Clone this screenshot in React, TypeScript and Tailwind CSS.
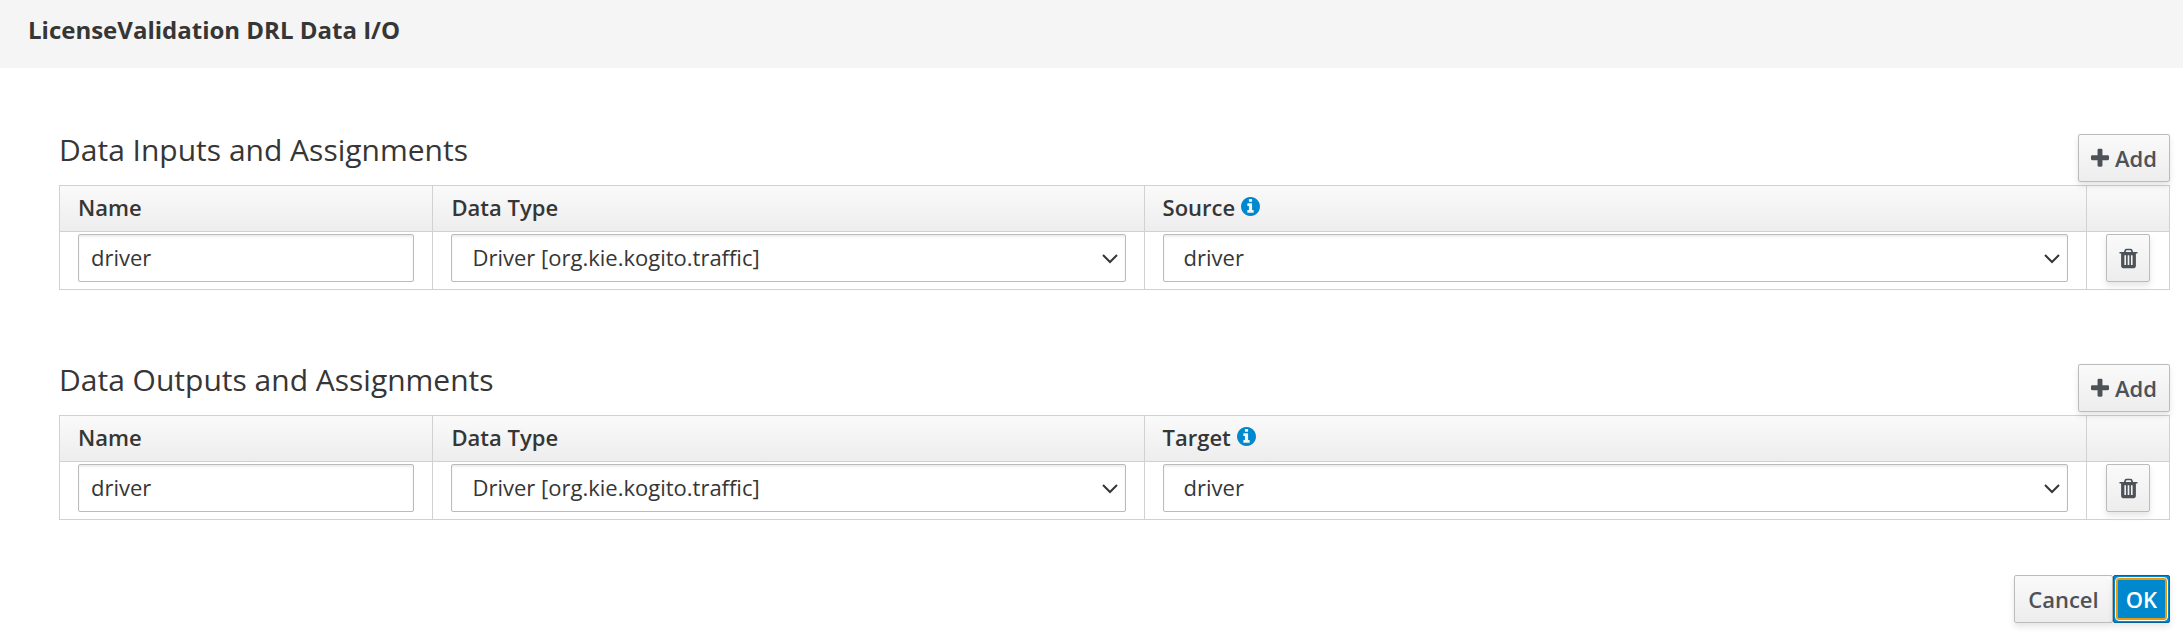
import { useState } from "react";

type Row = { name: string; dataType: string; value: string };

type AssignmentsProps = {
  id: string;
  title: string;
  valueLabel: string;
  hint: string;
};

const button =
  "flex h-12 cursor-pointer items-center justify-center rounded-xs border border-[#bbb] bg-linear-to-b from-[#fafafa] to-[#ededed] font-semibold text-[#4d5258] shadow-[0_4px_6px_rgba(3,3,3,0.1)]";

const field =
  "block h-12 w-full rounded-xs border border-[#bbb] bg-white pb-0.5 text-[#363636] shadow-[inset_0_2px_2px_rgba(3,3,3,0.075)] outline-none";

const headCell = "border border-[#d1d1d1] px-[18px] pb-1 font-semibold";
const bodyCell = "border border-[#d1d1d1] px-[18px] pt-0.5";

function PlusIcon() {
  return (
    <svg viewBox="192 0 1408 1792" className="h-[23px] w-[18px]" fill="currentColor" aria-hidden="true">
      <path d="M1600 736v192q0 40-28 68t-68 28h-416v416q0 40-28 68t-68 28h-192q-40 0-68-28t-28-68v-416h-416q-40 0-68-28t-28-68v-192q0-40 28-68t68-28h416v-416q0-40 28-68t68-28h192q40 0 68 28t28 68v416h416q40 0 68 28t28 68z" />
    </svg>
  );
}

function TrashIcon() {
  return (
    <svg viewBox="0 0 1792 1792" className="size-[23px]" fill="currentColor" aria-hidden="true">
      <path d="M704 1376v-704q0-14-9-23t-23-9h-64q-14 0-23 9t-9 23v704q0 14 9 23t23 9h64q14 0 23-9t9-23zm256 0v-704q0-14-9-23t-23-9h-64q-14 0-23 9t-9 23v704q0 14 9 23t23 9h64q14 0 23-9t9-23zm256 0v-704q0-14-9-23t-23-9h-64q-14 0-23 9t-9 23v704q0 14 9 23t23 9h64q14 0 23-9t9-23zm-544-992h448l-48-117q-7-9-17-11h-317q-10 2-17 11zm928 32v64q0 14-9 23t-23 9h-96v948q0 83-47 143.500t-113 60.500h-832q-66 0-113-58.500t-47-141.500v-952h-96q-14 0-23-9t-9-23v-64q0-14 9-23t23-9h309l70-167q15-37 54-63t79-26h320q40 0 79 26t54 63l70 167h309q14 0 23 9t9 23z" />
    </svg>
  );
}

function InfoIcon() {
  return (
    <svg viewBox="128 128 1536 1536" className="size-[19px] text-[#0088ce]" fill="currentColor" aria-hidden="true">
      <path d="M1152 1376v-160q0-14-9-23t-23-9h-96v-512q0-14-9-23t-23-9h-320q-14 0-23 9t-9 23v160q0 14 9 23t23 9h96v320h-96q-14 0-23 9t-9 23v160q0 14 9 23t23 9h448q14 0 23-9t9-23zm-128-896v-160q0-14-9-23t-23-9h-192q-14 0-23 9t-9 23v160q0 14 9 23t23 9h192q14 0 23-9t9-23zm640 416q0 209-103 385.500t-279.500 279.500-385.500 103-385.500-103-279.500-279.500-103-385.500 103-385.500 279.500-279.500 385.500-103 385.500 103 279.500 279.500 103 385.500z" />
    </svg>
  );
}

function Select({ label, value, options }: { label: string; value: string; options: string[] }) {
  return (
    <div className="relative">
      <select aria-label={label} defaultValue={value} className={`${field} appearance-none pr-12 pl-5`}>
        {options.map((option) => (
          <option key={option}>{option}</option>
        ))}
      </select>
      <svg
        viewBox="0 0 16 10"
        className="pointer-events-none absolute top-5 right-2 h-[10px] w-4"
        fill="none"
        stroke="#363636"
        strokeWidth="2"
        aria-hidden="true"
      >
        <path d="M1 1l7 7 7-7" />
      </svg>
    </div>
  );
}

function Assignments({ id, title, valueLabel, hint }: AssignmentsProps) {
  const [rows, setRows] = useState<Row[]>([
    { name: "driver", dataType: "Driver [org.kie.kogito.traffic]", value: "driver" },
  ]);

  const addRow = () => setRows([...rows, { name: "", dataType: "", value: "" }]);
  const removeRow = (index: number) => setRows(rows.filter((_, i) => i !== index));

  return (
    <section aria-labelledby={id}>
      <div className="flex items-start justify-between pb-[3px]">
        <h2 id={id} className="text-[30px] leading-8">
          {title}
        </h2>
        <button type="button" onClick={addRow} className={`${button} gap-1.5 px-3`}>
          <PlusIcon />
          Add
        </button>
      </div>
      <table className="w-full table-fixed border-collapse">
        <colgroup>
          <col className="w-[17.7%]" />
          <col className="w-[33.7%]" />
          <col />
          <col className="w-[83px]" />
        </colgroup>
        <thead>
          <tr className="h-[46px] bg-linear-to-b from-[#fafafa] to-[#ededed] text-left">
            <th className={headCell}>Name</th>
            <th className={headCell}>Data Type</th>
            <th className={headCell}>
              <span className="flex items-center gap-1.5" title={hint}>
                {valueLabel}
                <InfoIcon />
              </span>
            </th>
            <th className="border border-[#d1d1d1]" aria-label="Actions" />
          </tr>
        </thead>
        <tbody>
          {rows.map((row, i) => (
            <tr key={i} className="h-[58px] align-top">
              <td className={bodyCell}>
                <input aria-label="Name" defaultValue={row.name} className={`${field} px-3`} />
              </td>
              <td className={bodyCell}>
                <Select label="Data Type" value={row.dataType} options={[row.dataType]} />
              </td>
              <td className={bodyCell}>
                <Select label={valueLabel} value={row.value} options={[row.value]} />
              </td>
              <td className={bodyCell}>
                <button type="button" aria-label="Delete" onClick={() => removeRow(i)} className={`${button} mx-auto w-11`}>
                  <TrashIcon />
                </button>
              </td>
            </tr>
          ))}
        </tbody>
      </table>
    </section>
  );
}

export default function App() {
  return (
    <div className="bg-white font-['Open_Sans',sans-serif] text-[22px] leading-8 text-[#363636]">
      <header className="bg-[#f5f5f5] px-7 pt-3.5 pb-[22px]">
        <h1 className="text-2xl leading-8 font-bold">LicenseValidation DRL Data I/O</h1>
      </header>
      <main className="pt-[66px] pr-[13px] pl-[59px]">
        <div className="flex flex-col gap-[74px]">
          <Assignments
            id="inputs"
            title="Data Inputs and Assignments"
            valueLabel="Source"
            hint="Variable or constant read into the input"
          />
          <Assignments
            id="outputs"
            title="Data Outputs and Assignments"
            valueLabel="Target"
            hint="Variable that receives the output"
          />
        </div>
        <div className="flex justify-end pt-[55px] pb-3">
          <button type="button" className={`${button} px-[13px]`}>
            Cancel
          </button>
          <button
            type="button"
            className="relative flex h-12 cursor-pointer items-center rounded-xs border border-[#00659c] bg-[#0088ce] px-3 font-semibold text-white shadow-[0_4px_6px_rgba(3,3,3,0.1)] outline-none after:absolute after:inset-px after:rounded-sm after:border after:border-white after:shadow-[inset_0_0_0_2px_#ec9a08]"
          >
            OK
          </button>
        </div>
      </main>
    </div>
  );
}
